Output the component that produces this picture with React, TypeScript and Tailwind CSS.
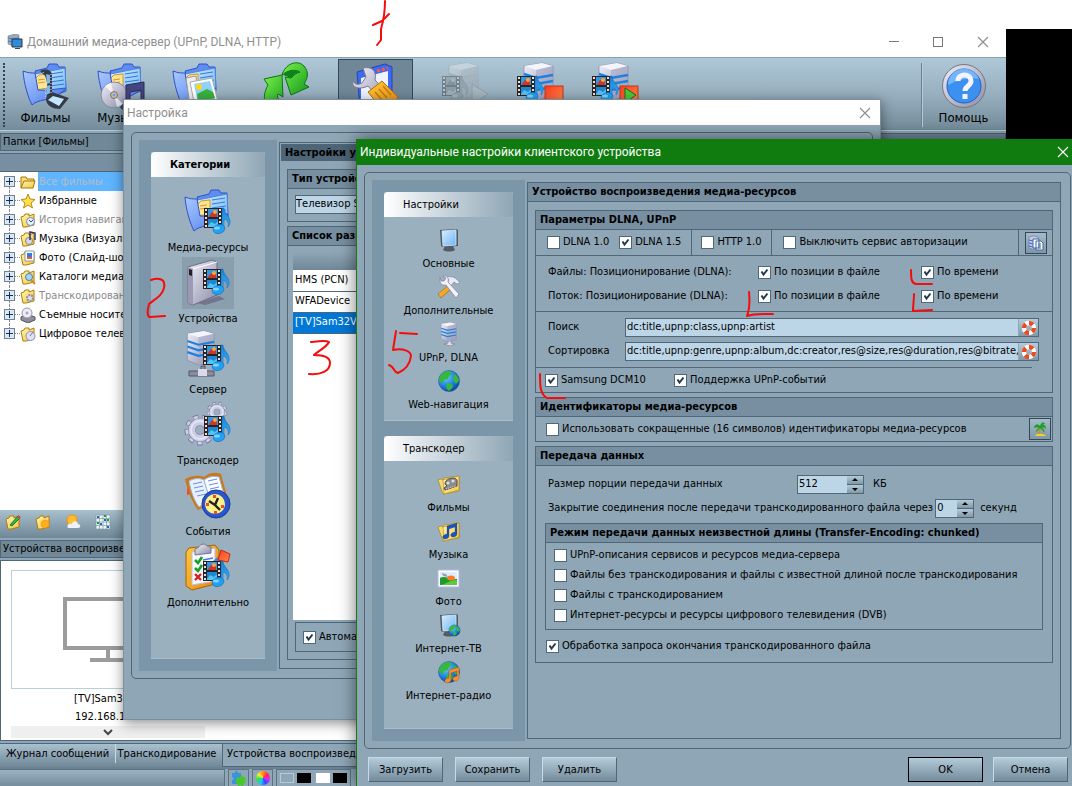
import type { ReactNode } from "react";
import clsx from "clsx";

const tahoma = "font-['DejaVu_Sans_Condensed','DejaVu_Sans',sans-serif]";
const caption = "font-[Roboto,'Noto_Sans',sans-serif]";

/* ---------- icon parts ---------- */

const Defs = () => (
  <svg className="absolute size-0" aria-hidden="true">
    <defs>
      <linearGradient id="blue" x1="0" y1="0" x2="1" y2="1">
        <stop offset="0" stopColor="#a9c8ff" />
        <stop offset="0.5" stopColor="#7ca4f6" />
        <stop offset="1" stopColor="#3f68dc" />
      </linearGradient>
      <linearGradient id="page" x1="0" y1="0" x2="1" y2="1">
        <stop offset="0" stopColor="#d6edff" />
        <stop offset="1" stopColor="#6cb4f5" />
      </linearGradient>
      <linearGradient id="silver" x1="0" y1="0" x2="1" y2="1">
        <stop offset="0" stopColor="#f1f1fb" />
        <stop offset="1" stopColor="#8a8aa8" />
      </linearGradient>
      <linearGradient id="gold" x1="0" y1="0" x2="1" y2="1">
        <stop offset="0" stopColor="#fff6b0" />
        <stop offset="1" stopColor="#f2c842" />
      </linearGradient>
      <linearGradient id="green" x1="0" y1="0" x2="1" y2="1">
        <stop offset="0" stopColor="#7bf04a" />
        <stop offset="1" stopColor="#10981c" />
      </linearGradient>
      <linearGradient id="note" x1="0" y1="0" x2="0" y2="1">
        <stop offset="0" stopColor="#1c7fd0" />
        <stop offset="1" stopColor="#36b4ff" />
      </linearGradient>
      <linearGradient id="orange" x1="0" y1="0" x2="1" y2="1">
        <stop offset="0" stopColor="#ffc93c" />
        <stop offset="1" stopColor="#e8860c" />
      </linearGradient>
      <linearGradient id="red" x1="0" y1="0" x2="1" y2="1">
        <stop offset="0" stopColor="#ff3a1e" />
        <stop offset="1" stopColor="#ff8a4a" />
      </linearGradient>
      <radialGradient id="globe" cx="0.35" cy="0.3" r="0.8">
        <stop offset="0" stopColor="#6fd0ff" />
        <stop offset="0.6" stopColor="#1c78dc" />
        <stop offset="1" stopColor="#0a3a94" />
      </radialGradient>
    </defs>
  </svg>
);

const Icon = ({
  className = "size-12",
  box = 48,
  children,
}: {
  className?: string;
  box?: number;
  children: ReactNode;
}) => (
  <svg
    className={clsx("shrink-0", className)}
    viewBox={`0 0 ${box} ${box}`}
    aria-hidden="true"
  >
    {children}
  </svg>
);

const FilmNote = ({ x = 0, y = 0 }: { x?: number; y?: number }) => (
  <g transform={`translate(${x} ${y})`}>
    <rect x="20" y="19" width="18" height="20" fill="#2c2422" />
    <rect x="24" y="20" width="10" height="8" fill="#2f9ae0" />
    <path d="M25 27l3-4 5 1v4h-8z" fill="#c8382c" />
    <circle cx="31" cy="23" r="2" fill="#ffa23c" />
    <rect x="24" y="30" width="10" height="8" fill="#1f86d2" />
    <path d="M24 37l3-4 4 2 3-3v6H24z" fill="#54c4f4" />
    <path
      d="M22 20v19M36 20v19"
      stroke="#e6e0dc"
      strokeWidth="2"
      strokeDasharray="2 2"
    />
    <path
      d="M38 40V19h2c0 6 7 8 6 15 0 2-2 4-2 4 1-5-1-7-4-8v10z"
      fill="url(#note)"
      stroke="#0e64b4"
      strokeWidth="0.5"
    />
    <ellipse
      cx="35"
      cy="40"
      rx="6"
      ry="4.5"
      transform="rotate(-15 35 40)"
      fill="#22a0f4"
      stroke="#0e64b4"
      strokeWidth="0.5"
    />
    <ellipse cx="33" cy="39" rx="3" ry="1.5" fill="#7fd4ff" />
  </g>
);

const BlueFolder = () => (
  <g>
    <path
      d="M13 9l12-3 2-4h8l2 3h6l1 24-20 8z"
      fill="#5f8cf0"
      stroke="#2f52c8"
    />
    <path d="M13 12l30-6 1 22-26 7z" fill="url(#page)" stroke="#4a86dc" />
    <path d="M28 12l13-2M28 16l13-2M28 20l14-2M28 24l14-2" stroke="#2f78d8" />
    <path d="M13 17l4-4 9-1v14l-13 2z" fill="#ffe694" stroke="#d49a20" />
    <path d="M16 18l7-1M16 21l7-1" stroke="#d49a20" />
    <path
      d="M1 9c5 2 8 2 12 2l3 17c8 1 17-1 28-2-4 6-14 10-22 12-5 1-9 2-12 5C6 35 2 22 1 9z"
      fill="url(#blue)"
      stroke="#2f52c8"
    />
  </g>
);

const Server = ({ dull }: { dull?: boolean }) => (
  <g>
    <path
      d="M8 4l18-3 11 3v30l-17 4L8 33z"
      fill="url(#silver)"
      stroke="#7c7c9a"
      strokeWidth="0.6"
    />
    <path d="M8 4l18-3 11 3-17 4z" fill="#f4f4fc" />
    <path d="M20 8l17-4v30l-17 4z" fill="#a9a9c8" opacity="0.6" />
    <path
      d="M8 12l12 4 17-3M8 18l12 4 17-3M8 24l12 4 17-3"
      fill="none"
      stroke={dull ? "#9aa4ac" : "#1b82e0"}
      strokeWidth="2.4"
    />
  </g>
);

const Cog = ({ cx, cy, r }: { cx: number; cy: number; r: number }) => (
  <g fill="none">
    <circle
      cx={cx}
      cy={cy}
      r={r * 0.86}
      stroke="#7474a0"
      strokeWidth={r * 0.34}
      pathLength="90"
      strokeDasharray="5.500 4.500"
    />
    <circle
      cx={cx}
      cy={cy}
      r={r * 0.84}
      stroke="#d0d0ea"
      strokeWidth={r * 0.26}
      pathLength="90"
      strokeDasharray="4.500 5.500"
      strokeDashoffset="-0.5"
    />
    <circle cx={cx} cy={cy} r={r * 0.54} stroke="#7474a0" strokeWidth={r * 0.5} />
    <circle cx={cx} cy={cy} r={r * 0.54} stroke="#ccccE4" strokeWidth={r * 0.44} />
    <circle cx={cx} cy={cy} r={r * 0.6} stroke="#e4e4f4" strokeWidth={r * 0.12} />
  </g>
);

const MediaIcon = () => (
  <Icon>
    <BlueFolder />
    <FilmNote y={1} />
  </Icon>
);
const DeviceIcon = () => (
  <Icon>
    <path d="M13 44l22-7 6 3-20 6z" fill="#74748c" />
    <path
      d="M4 8L28 1l5 2v33L9 46l-5-2z"
      fill="url(#silver)"
      stroke="#6c6c86"
    />
    <path d="M4 8l5 2v36l-5-2z" fill="#9a9ab4" />
    <path d="M5 10l3 1v6l-3-1z" fill="#222" />
    <path d="M9 10L33 3" stroke="#fff" />
    <FilmNote x={-1} y={-9} />
  </Icon>
);
const ServerIcon = () => (
  <Icon>
    <path d="M17 36h4v5h9v5H5v-5h12z" fill="#8c8ca0" stroke="#55556a" />
    <path d="M14 39h9v7h-9z" fill="#dadae8" />
    <g transform="translate(-4 0) scale(.92)">
      <Server />
    </g>
    <FilmNote x={-1} y={-4} />
  </Icon>
);
const GearIcon = () => (
  <Icon>
    <Cog cx={33} cy={11} r={10} />
    <Cog cx={16} cy={29} r={15} />
    <FilmNote y={-4} />
  </Icon>
);
const EventsIcon = () => (
  <Icon>
    <path d="M1 7c8-4 14-4 19-2 6-5 12-5 17-3l7 26-12 1-18 9C8 30 4 20 1 7z" fill="#c9791c" />
    <path
      d="M5 9c6-3 10-3 15-1l6 20-11 7C10 28 7 20 5 9z"
      fill="#e8f2ff"
      stroke="#9db8e4"
    />
    <path d="M20 8c5-4 10-4 15-3l6 21-15 2z" fill="#f8fbff" stroke="#9db8e4" />
    <path
      d="M9 12l9-2M10 16l9-2M11 20l9-2M13 24l9-2M24 9l9-2M25 13l9-2M26 17l9-2"
      stroke="#6c8ce0"
    />
    <path d="M3 15l3 7-3 1z" fill="#f04a2a" />
    <circle cx="32" cy="32" r="14" fill="#2a55cc" stroke="#173a98" />
    <circle cx="31" cy="32" r="10" fill="#fff08a" />
    <path d="M34 26l-3 7 5 5M31 33l-6-4" stroke="#222" strokeWidth="2.4" fill="none" />
    <path d="M29 23h3v3h-3zM30 39h3v3h-3zM22 31h3v3h-3zM37 33h3v3h-3z" fill="#e8502a" />
  </Icon>
);
const ExtraIcon = () => (
  <Icon>
    <path
      d="M5 5l26-3 4 5v33L8 47l-6-4V9z"
      fill="url(#orange)"
      stroke="#a8600c"
    />
    <path d="M8 9l23-4v33L8 42z" fill="#f6f8ff" stroke="#b4c0e4" />
    <path d="M11 6c4 0 4-5 8-5s3 3 8 3v6l-16 2z" fill="url(#silver)" stroke="#77778c" />
    <path d="M19 17l10-2M19 25l10-2" stroke="#4f78e8" strokeWidth="1.5" />
    <path d="M29 18l6-5 4 6-5 4z" fill="#4f78e8" />
    <path d="M37 7l9 4-2 8-10-2z" fill="url(#red)" stroke="#c42a12" />
    <path d="M11 17l3 3 4-6M11 25l3 3 4-6" fill="none" stroke="#16a022" strokeWidth="2.6" />
    <path d="M11 31l6 6M17 31l-6 6" stroke="#d81c1c" strokeWidth="2.4" />
    <FilmNote x={-1} y={-1} />
  </Icon>
);

/* small 24px icons of the inner dialog */
const MonitorShape = () => (
  <g>
    <path d="M8 18h8l2 4c-3 2-9 2-12 0z" fill="#555b64" />
    <path d="M3 2l16-1 2 1v16l-15 1-2-1z" fill="#505862" />
    <path d="M5 3l14-1v15L6 18z" fill="url(#page)" stroke="#d4ecfa" strokeWidth="0.8" />
  </g>
);
const GlobeShape = () => (
  <g>
    <circle cx="12" cy="12" r="10.5" fill="url(#globe)" stroke="#0e4a94" strokeWidth="0.5" />
    <path
      d="M4 6c3-4 7-4 9-4l2 3-3 2-1 3-4 1-1 3-4-2c0-2 0-4 2-6zM10 14l5 1 1 3-4 4-3-3zM17 5c3 1 5 4 5 7l-3 3-3-4z"
      fill="#35b83c"
    />
  </g>
);
const FolderShape = () => (
  <g>
    <path d="M1 8l3-1 2 1 1-2 15-2v15L6 22z" fill="#f4dc74" stroke="#a87408" strokeWidth="0.6" />
    <path d="M6 8l16-4v14L7 22z" fill="url(#gold)" stroke="#b88410" strokeWidth="0.6" />
  </g>
);
const NotesShape = ({ fill }: { fill: string }) => (
  <path
    d="M10 7l10-3v11c0 2-2 3-4 3s-3-2-2-3 2-2 4-2V8l-6 2v7c0 2-2 3-4 3s-3-2-2-3 2-2 4-2z"
    fill={fill}
    stroke="#00000055"
    strokeWidth="0.5"
  />
);

const MonitorIcon = () => (
  <Icon className="size-6" box={24}>
    <MonitorShape />
  </Icon>
);
const ToolsIcon = () => (
  <Icon className="size-6" box={24}>
    <path d="M12 10L1 19l3 4L15 13z" fill="url(#orange)" stroke="#9a6408" strokeWidth="0.6" />
    <path
      d="M9 2c6-1 10 0 14 6l-3 1-3-2-4 5-4-3 3-4z"
      fill="#e8eaf6"
      stroke="#7c7c9c"
      strokeWidth="0.6"
    />
    <path
      d="M3 2l1 4 3 0 2-3-3-2c4-1 6 2 5 6l11 12-3 4L9 10c-5 1-7-3-6-8z"
      fill="#f2f2fb"
      stroke="#7c7c9c"
      strokeWidth="0.7"
    />
  </Icon>
);
const SmallServerIcon = () => (
  <Icon className="size-6" box={24}>
    <path d="M11 18h3v3l4 1-5 2-6-2 4-1z" fill="#dcdcea" stroke="#68687c" strokeWidth="0.5" />
    <g transform="translate(0 0) scale(.52)">
      <Server />
    </g>
  </Icon>
);
const GlobeIcon = () => (
  <Icon className="size-6" box={24}>
    <GlobeShape />
  </Icon>
);
const FilmFolderIcon = () => (
  <Icon className="size-6" box={24}>
    <FolderShape />
    <path d="M8 12c0-6 12-8 12-3v5l-12 4-1-2 3-2z" fill="#8b8b94" stroke="#4c4c54" />
    <circle cx="11" cy="11" r="1.6" fill="#ddd" />
    <circle cx="16" cy="9" r="1.6" fill="#ddd" />
    <path d="M9 17l10-3" stroke="#eee" strokeDasharray="1 1" />
  </Icon>
);
const MusicFolderIcon = () => (
  <Icon className="size-6" box={24}>
    <FolderShape />
    <NotesShape fill="#1854c8" />
  </Icon>
);
const PhotoIcon = () => (
  <Icon className="size-6" box={24}>
    <rect x="1" y="4" width="21" height="17" fill="#fff" stroke="#b8b4e8" />
    <rect x="3" y="6" width="17" height="13" fill="#dceefc" />
    <path d="M3 12c5-3 9 2 17 1v6H3z" fill="#1f9a2a" />
    <path d="M3 19c5 0 9-5 17-5v5z" fill="#58cc3c" />
    <ellipse cx="14" cy="12" rx="4" ry="2.5" fill="#ff7a2c" />
    <path d="M5 7l4 1 2 3-5-1z" fill="#98a4ac" />
  </Icon>
);
const NetTvIcon = () => (
  <Icon className="size-6" box={24}>
    <MonitorShape />
    <g transform="translate(11 11) scale(.54)">
      <GlobeShape />
    </g>
  </Icon>
);
const NetRadioIcon = () => (
  <Icon className="size-6" box={24}>
    <GlobeShape />
    <g transform="translate(2 3)">
      <NotesShape fill="#ff8a2a" />
    </g>
  </Icon>
);

/* ---------- controls ---------- */

const Check = ({
  label,
  checked,
  className,
}: {
  label: string;
  checked?: boolean;
  className?: string;
}) => (
  <label className={clsx("flex items-center gap-[3px] whitespace-nowrap", className)}>
    <span className="grid shrink-0">
      <input
        type="checkbox"
        defaultChecked={checked}
        className="peer col-start-1 row-start-1 size-[13px] appearance-none border border-[#4f6778] bg-white"
      />
      <svg
        viewBox="0 0 13 13"
        className="pointer-events-none invisible col-start-1 row-start-1 size-[13px] peer-checked:visible"
      >
        <path d="M3.5 5.5l2 3 4-5" fill="none" stroke="#1f3a4c" strokeWidth="2" />
      </svg>
    </span>
    {label}
  </label>
);

const Group = ({
  title,
  className,
  children,
}: {
  title: string;
  className?: string;
  children: ReactNode;
}) => (
  <section className={clsx("flex flex-col border border-[#4f6778]", className)}>
    <h3 className="h-[19px] shrink-0 overflow-hidden border-b border-[#4f6778] bg-[#778fa0] pl-1 leading-[18px] font-bold whitespace-nowrap">
      {title}
    </h3>
    {children}
  </section>
);

const PushButton = ({ label, primary }: { label: string; primary?: boolean }) => (
  <button
    className={clsx(
      "h-[25px] w-[75px] border bg-linear-to-b from-[#b4cbda] to-[#748c9b] pt-px",
      primary
        ? "border-black"
        : "border-t-[#c3dbea] border-r-[#4f6778] border-b-[#4f6778] border-l-[#c3dbea]",
    )}
  >
    {label}
  </button>
);

const Spin = ({ label, value, className }: { label: string; value: string; className: string }) => (
  <span className={clsx("flex h-[19px] shrink-0 border border-[#4f6778] bg-[#bdd6e7]", className)}>
    <input aria-label={label} defaultValue={value} className="min-w-0 flex-1 px-px outline-none" />
    <span className="flex w-4 flex-col gap-px bg-[#4f6778]">
      {["M4 5h6L7 2z", "M4 3h6L7 6z"].map((d) => (
        <button
          key={d}
          aria-label={label}
          className="h-2 bg-linear-to-b from-[#b4cbda] to-[#8198a7]"
        >
          <svg viewBox="0 0 14 8" className="mx-auto h-2 w-3.5">
            <path d={d} />
          </svg>
        </button>
      ))}
    </span>
  </span>
);

const HelpField = ({ id, label, value }: { id: string; label: string; value: string }) => (
  <div className="flex items-center pr-[13px] pl-3">
    <label htmlFor={id} className="w-[77px] shrink-0">
      {label}
    </label>
    <div className="flex h-[19px] min-w-0 flex-1 border border-[#4f6778] bg-[#bdd6e7]">
      <input id={id} defaultValue={value} className="min-w-0 flex-1 pl-px outline-none" />
      <button
        aria-label="Справка"
        className="flex w-5 items-center justify-center border-l border-[#8fa6b5] bg-linear-to-b from-[#b4cbda] to-[#8198a7]"
      >
        <svg viewBox="0 0 16 16" className="size-4">
          <circle cx="8" cy="8" r="5" fill="none" stroke="#fff" strokeWidth="4.4" />
          <circle
            cx="8"
            cy="8"
            r="5"
            fill="none"
            stroke="#ee4a1e"
            strokeWidth="4.4"
            pathLength="80"
            strokeDasharray="11 9"
          />
        </svg>
      </button>
    </div>
  </div>
);

const NavHeader = ({ title, bold }: { title: string; bold?: boolean }) => (
  <h2
    className={clsx(
      "h-[25px] rounded-t-sm bg-linear-to-r from-white to-[#8fa6b5] pl-[19px] leading-[26px]",
      bold && "font-bold",
    )}
  >
    {title}
  </h2>
);

const NavPanel = ({
  title,
  items,
  className,
}: {
  title: string;
  items: [string, () => ReactNode][];
  className?: string;
}) => (
  <nav className={clsx("border-b border-[#a8bccb] bg-[#9bb0be]", className)}>
    <NavHeader title={title} />
    <ul className="pt-[11px]">
      {items.map(([label, Glyph]) => (
        <li key={label}>
          <button className="flex h-[47px] w-full flex-col items-center">
            <Glyph />
            <span className="leading-6">{label}</span>
          </button>
        </li>
      ))}
    </ul>
  </nav>
);

const CloseGlyph = () => (
  <svg viewBox="0 0 12 12" className="size-3">
    <path d="M1 1l10 10M11 1L1 11" stroke="currentColor" strokeWidth="1.2" />
  </svg>
);

/* ---------- main window ---------- */

const ToolButton = ({
  label,
  active,
  className,
  children,
}: {
  label: string;
  active?: boolean;
  className?: string;
  children: ReactNode;
}) => (
  <button
    className={clsx(
      "flex h-[70px] w-[75px] shrink-0 flex-col items-center pt-[3px] text-[13px] leading-4",
      active && "border border-[#33495a] bg-[#6f8797]",
      className,
    )}
  >
    {children}
    {label}
  </button>
);

const SmallFolder = ({ children }: { children?: ReactNode }) => (
  <Icon className="size-4" box={16}>
    <path d="M1 5l3-1 1-2h4v2l5-2v11l-8 2H3z" fill="url(#gold)" stroke="#b07c10" />
    {children}
  </Icon>
);

const tree: { label: string; muted?: boolean; icon: ReactNode }[] = [
  {
    label: "Все фильмы",
    icon: (
      <Icon className="size-4" box={16}>
        <path d="M1 14V3h5l1 2h7v3" fill="#ffdf70" stroke="#a87408" />
        <path d="M1 14L4 7h11l-2 7z" fill="url(#gold)" stroke="#a87408" />
      </Icon>
    ),
  },
  {
    label: "Избранные",
    icon: (
      <Icon className="size-4" box={16}>
        <path d="M8 1l2 5 5 .5-4 3.500 1.500 5L8 12l-4.500 3 1.500-5-4-3.500 5-.5z" fill="#ffe04a" stroke="#b88a10" />
      </Icon>
    ),
  },
  {
    label: "История навигации",
    muted: true,
    icon: (
      <SmallFolder>
        <circle cx="10.500" cy="9.500" r="4" fill="#e8f2ff" stroke="#6a88b8" />
        <path d="M9 8l2 2 2-2" fill="none" stroke="#2a4a80" />
      </SmallFolder>
    ),
  },
  {
    label: "Музыка (Визуализация)",
    icon: (
      <SmallFolder>
        <circle cx="9" cy="10" r="3.500" fill="#d8d8e4" stroke="#888" />
        <path d="M10 9V1l5 1v7" fill="none" stroke="#34346c" strokeWidth="1.500" />
      </SmallFolder>
    ),
  },
  {
    label: "Фото (Слайд-шоу)",
    icon: (
      <SmallFolder>
        <path d="M5 1h9v10H5z" fill="#fff" stroke="#8a94a8" />
        <path d="M7 3h5v6H7z" fill="#2c7ee0" />
        <path d="M7 7h5v2H7z" fill="#f05a2a" />
      </SmallFolder>
    ),
  },
  {
    label: "Каталоги медиа-ресурсов",
    icon: (
      <SmallFolder>
        <circle cx="9" cy="8" r="3.500" fill="#9cd8ff" stroke="#4a80b8" />
        <path d="M11 11l4 4" stroke="#d88a20" strokeWidth="2" />
      </SmallFolder>
    ),
  },
  {
    label: "Транскодирование",
    muted: true,
    icon: (
      <SmallFolder>
        <circle cx="10" cy="10" r="3" fill="#ddd" stroke="#8c8ca8" strokeWidth="2" strokeDasharray="2 1" />
      </SmallFolder>
    ),
  },
  {
    label: "Съемные носители",
    icon: (
      <Icon className="size-4" box={16}>
        <path d="M1 10l6-3 8 3v3l-7 3-7-3z" fill="#8e8e98" stroke="#55555f" />
        <circle cx="7" cy="6" r="5" fill="#ececf4" stroke="#9898a8" />
        <circle cx="7" cy="6" r="1.500" fill="#b0a0d0" />
      </Icon>
    ),
  },
  {
    label: "Цифровое телевидение",
    icon: (
      <SmallFolder>
        <circle cx="10.500" cy="10" r="4.500" fill="#dfe2f4" stroke="#8c90b4" />
        <path d="M10 10l3-4" stroke="#7478a0" />
      </SmallFolder>
    ),
  },
];

const PaneTitle = ({ children }: { children: ReactNode }) => (
  <div className="my-0.5 h-[18px] shrink-0 border border-[#4f6778] bg-[#708898] pl-0.5 leading-4">
    {children}
  </div>
);

const MainWindow = () => (
  <div className="absolute top-[29px] right-[66px] bottom-0 left-0 flex flex-col bg-[#8fa6b6]">
    <header
      className={clsx(
        "flex h-7 shrink-0 items-center bg-white pr-[17px] pb-[3px] pl-[7px] text-xs text-[#8f8f8f]",
        caption,
      )}
    >
      <Icon className="size-4" box={16}>
        <path d="M1 2l7-2 4 1v9l-6 2-5-2z" fill="#9aa8bc" stroke="#5f7088" strokeWidth="0.500" />
        <path d="M1 4l5 1 6-1M1 7l5 1 6-1" stroke="#3c7cc8" fill="none" />
        <path d="M5 5h10v8H5z" fill="#2a8ee0" stroke="#333" />
        <path d="M8 14h5v1H8z" fill="#444" />
      </Icon>
      <span className="ml-1 flex-1">Домашний медиа-сервер (UPnP, DLNA, HTTP)</span>
      <div className="flex items-center gap-[34px]">
        <button aria-label="Свернуть">
          <span className="block h-px w-2.5 bg-[#777]" />
        </button>
        <button aria-label="Развернуть">
          <span className="block size-2.5 border border-[#777]" />
        </button>
        <button aria-label="Закрыть">
          <CloseGlyph />
        </button>
      </div>
    </header>

    {/* TOOLBAR */}
    <div className="flex h-[74px] shrink-0 border-t border-b border-t-[#8aa2b0] border-b-[#b4cbda] bg-linear-to-b from-[#afc8d8] via-[#97afbe] to-[#748c9b] pt-px">
      <span className="mt-1 mr-[3px] ml-[3px] h-16 border-l-2 border-dotted border-[#2f4656]" />
      <ToolButton label="Фильмы">
        <Icon>
          <BlueFolder />
          <path d="M18 9c7-3 12-1 12 5v16l17 6-9 11c-7 0-13-3-14-9 2-8 2-18-1-24z" fill="#343a46" />
          <path d="M24 12l4 1v8l-3 1zM25 24l3-1v8l-4 2z" fill="#7eb8ec" />
          <path d="M26 38l5-4 11 3-5 7z" fill="#c4e6fc" />
          <path d="M21 10c3 8 3 18 2 27M29 12v20" fill="none" stroke="#dde" strokeDasharray="1 2" />
        </Icon>
      </ToolButton>
      <ToolButton label="Музыка">
        <Icon>
          <BlueFolder />
          <circle cx="17" cy="33" r="13" fill="url(#silver)" stroke="#88889c" />
          <path d="M17 33l-9-9a13 13 0 0 1 6-3zM17 33l9 9a13 13 0 0 1-6 3z" fill="#fff" opacity="0.7" />
          <circle cx="17" cy="33" r="3.500" fill="#c8b8b0" stroke="#776" />
          <circle cx="17" cy="33" r="1.300" fill="#7c96e0" />
          <path
            d="M29 23l18-3v19c0 3-6 5-8 3-1-2 2-4 5-4V28l-11 2v14c-2 4-8 4-9 2s2-4 5-4z"
            fill="#46467e"
            stroke="#2a2a58"
          />
        </Icon>
      </ToolButton>
      <ToolButton label="Фото">
        <Icon>
          <BlueFolder />
          <path d="M14 16l10-2 3 28-9 2z" fill="#eee" stroke="#999" />
          <path d="M18 20l22-4 6 24-23 5z" fill="#fff" stroke="#aaa" />
          <path d="M22 22l16-3 5 18-17 4z" fill="#8fd0ff" />
          <path d="M25 32l10-5 6 3 2 6-17 4z" fill="#38b43a" />
          <circle cx="27" cy="25" r="3" fill="#ffd61e" />
        </Icon>
      </ToolButton>
      <ToolButton label="Обновить" className="ml-3.5">
        <Icon>
          <path
            d="M3 17l18-4 1 22-5-3c-2 4 2 8 10 9-2 3-4 5-9 5C5 45-1 38 7 23z"
            fill="url(#green)"
            stroke="#0c7414"
          />
          <path
            d="M21 13C24 2 36-3 43 4c5 6 4 12 0 18l5 3-18 8-6-18 6 1c3-3 5-5 9-6-5-3-12-2-18 3z"
            fill="url(#green)"
            stroke="#0c7414"
          />
          <path d="M22 13c4-5 12-6 17-3-4 1-7 3-9 6z" fill="#0d8418" />
        </Icon>
      </ToolButton>
      <ToolButton label="Настройка" active className="ml-4">
        <Icon>
          <path d="M5 9l28-8 7 3v42H8z" fill="#3c6af0" stroke="#2444b8" />
          <path d="M9 15l27-7v34H9z" fill="#eef4ff" />
          <path d="M25 8l11-3" stroke="#ff5a3a" strokeWidth="3" strokeDasharray="3 2" />
          <path
            d="M1 18c2 4 5 4 9 2l4-6-3-9c9-2 14 3 12 12l16 17-7 8-16-19C8 27-1 25 1 18z"
            fill="url(#silver)"
            stroke="#7a7a8c"
          />
          <path d="M16 29l14-11 16 16-9 13-9-3z" fill="url(#orange)" stroke="#b46a08" />
          <path d="M23 29l8 9M27 26l8 9M31 23l8 9" stroke="#c27c10" strokeWidth="1.500" />
        </Icon>
      </ToolButton>
      <ToolButton label="Запуск" className="ml-3.5 opacity-60 grayscale">
        <Icon className="size-12 opacity-60">
          <Server dull />
          <FilmNote x={-19} y={-5} />
          <path d="M31 22l16 10-16 11z" fill="#bbb" stroke="#777" />
        </Icon>
      </ToolButton>
      <ToolButton label="Остановка">
        <Icon>
          <Server />
          <FilmNote x={-19} y={-5} />
          <rect x="29" y="24" width="18" height="18" fill="url(#red)" stroke="#b83a1c" />
        </Icon>
      </ToolButton>
      <ToolButton label="Перезапуск">
        <Icon>
          <Server />
          <FilmNote x={-19} y={-5} />
          <rect x="29" y="24" width="18" height="18" fill="url(#red)" stroke="#b83a1c" />
          <path d="M34 26l11 7-11 8z" fill="#4cc83a" stroke="#14701c" />
        </Icon>
      </ToolButton>
      <span className="mt-1 mr-[3px] ml-auto h-16 border-r border-l border-l-[#6b8292] border-r-[#b4cbda]" />
      <ToolButton label="Помощь" className="mr-[5px]">
        <Icon>
          <circle cx="24" cy="24" r="21.500" fill="url(#silver)" stroke="#777" />
          <circle cx="24" cy="24" r="17" fill="#3c90f0" stroke="#1c62c4" />
          <path d="M8 23a16 16 0 0 1 31-6c-8-2-20 0-31 6z" fill="#8cc4ff" opacity="0.700" />
          <path
            d="M18 19c0-8 13-8 13 0 0 5-6 5-6 10M25 32v5"
            fill="none"
            stroke="#f4f4ff"
            strokeWidth="5"
          />
        </Icon>
      </ToolButton>
    </div>

    <PaneTitle>Папки [Фильмы]</PaneTitle>
    <div className="h-[19px] shrink-0 border-t border-b border-t-[#4f6778] border-b-[#4f6778] bg-[#778fa0]" />
    <ul className="min-h-0 flex-1 bg-white pl-1">
      {tree.map(({ label, muted, icon }, i) => (
        <li key={label} className="flex h-[19px] items-center">
          <span className="flex h-full flex-col items-center">
            <span
              className={clsx(
                "flex-1 border-l border-dotted",
                i === 0 ? "border-transparent" : "border-[#8b8b8b]",
              )}
            />
            <button
              aria-label="Раскрыть"
              className="flex size-[11px] items-center justify-center border border-[#6c8496] bg-[#dbe8f2] leading-none"
            >
              <svg viewBox="0 0 9 9" className="size-[9px]">
                <path d="M1 4.500h7M4.500 1v7" stroke="#1c2c5c" />
              </svg>
            </button>
            <span
              className={clsx(
                "flex-1 border-l border-dotted",
                i === tree.length - 1 ? "border-transparent" : "border-[#8b8b8b]",
              )}
            />
          </span>
          <span className="w-[5px] border-t border-dotted border-[#8b8b8b]" />
          {icon}
          <span
            className={clsx(
              "ml-0.5 flex-1 pl-px leading-[19px]",
              i === 0 && "bg-[#5fb5ff] text-[#b4bcc4]",
              muted && "text-[#8b8b8b]",
            )}
          >
            {label}
          </span>
        </li>
      ))}
    </ul>

    {/* VIEW MODES */}
    <div className="flex h-7 shrink-0 items-center gap-3.5 bg-linear-to-b from-[#a9c0cf] to-[#6f8797] pb-1 pl-[5px]">
      <SmallFolder>
        <path d="M5 11L13 2l2 2-8 8z" fill="#3ab44a" stroke="#1a7a2a" />
        <path d="M13 2l2 2" stroke="#e03a2a" strokeWidth="2" />
      </SmallFolder>
      <SmallFolder>
        <circle cx="10" cy="10" r="4" fill="#ffae1c" stroke="#f08a10" strokeDasharray="1 1" />
      </SmallFolder>
      <Icon className="size-4" box={16}>
        <circle cx="7" cy="6" r="5" fill="#ffc02a" stroke="#ff8a10" />
        <path d="M3 14c-2-4 2-5 4-4 1-4 6-3 6 0 3 0 3 4 0 4z" fill="#eef2f8" />
      </Icon>
      <Icon className="size-4" box={16}>
        <path d="M1 1h14v14H1z" fill="#eef6f2" />
        <path d="M1 1h14v14H1zM1 4.500h14M1 8h14M1 11.500h14M4.500 1v14M8 1v14M11.500 1v14" fill="none" stroke="#7c98a8" strokeWidth="0.700" />
        <path d="M2 2h2v2H2zM9 5h2v2H9zM5 9h2v2H5zM12 12h2v2h-2z" fill="#1c68c8" />
        <path d="M9 1h2v2H9zM2 8h2v2H2zM12 5h2v2h-2z" fill="#1c9a3c" />
      </Icon>
    </div>
    <PaneTitle>Устройства воспроизведения медиа-ресурсов</PaneTitle>
    <div className="flex h-[181px] shrink-0 flex-col border border-[#4f6778] bg-white pt-[9px] pl-2.5">
      <figure className="flex w-[194px] flex-col items-center">
        <div className="flex h-[119px] w-full items-center justify-center border border-[#b8d0dc]">
          <svg viewBox="0 0 90 66" className="h-[66px] w-[90px] fill-none stroke-[#9c9c9c] stroke-4">
            <path d="M2 2h86v49H2zM45 51v12M27 63h36" />
          </svg>
        </div>
        <figcaption className="pt-px text-center leading-[18px]">
          [TV]Sam32VA
          <br />
          192.168.1.43
        </figcaption>
      </figure>
      <button
        aria-label="Прокрутить вниз"
        className="flex h-3 w-[194px] items-center justify-center bg-[#efefef]"
      >
        <svg viewBox="0 0 10 8" className="h-2 w-2.5">
          <path d="M1 2l4 4 4-4" fill="none" stroke="#444" strokeWidth="2" />
        </svg>
      </button>
    </div>

    <div className="mt-0.5 flex h-6 shrink-0 border-t border-[#4f6778] bg-linear-to-b from-[#a9c0cf] to-[#6f8797] leading-5 whitespace-nowrap">
      <button className="mb-1 w-[116px] border-r border-[#c3dbea]">Журнал сообщений</button>
      <button className="mb-1 w-[106px] pr-1">Транскодирование</button>
      <button className="border border-t-0 border-[#4f6778] bg-[#8fa6b6] px-1 pb-1">
        Устройства воспроизведения
      </button>
    </div>
    <footer className="flex h-[19px] shrink-0 gap-[3px] border-t-2 border-[#6b8292] bg-[#8fa6b6]">
      <span className="h-full w-[225px] border-t border-r border-[#5b7384] bg-linear-to-b from-[#9ab2c1] to-[#748c9b]" />
      <span className="flex w-[21px] justify-center border border-b-0 border-[#5b7384]">
        <Icon className="size-4" box={16}>
          <path d="M1 3h3c0-3 3-3 3 0h3v11H1v-4c2 0 2-3 0-3z" fill="#3a94d8" />
          <path d="M6 7l3 1c0-3 3-3 3-1l3 1-1 3c2 1 1 3-1 2l-1 3-3-1c-1 2-3 1-2-1l-2-1z" fill="#48c828" />
        </Icon>
      </span>
      <span className="flex w-[21px] items-center justify-center border border-b-0 border-[#5b7384]">
        <span className="size-3.5 rounded-full bg-[conic-gradient(#ff8a1e,#ff2a4a,#d82aff,#2a4aff,#1ec8ff,#2ae04a,#f4f02a,#ff8a1e)]" />
      </span>
      <span className="flex items-center gap-[3px] border border-b-0 border-[#5b7384] px-[3px]">
        <span className="h-2.5 w-3.5 border border-[#b4cbda]" />
        <span className="h-2.5 w-3.5 bg-black" />
        <span className="ml-0.5 h-2.5 w-3.5 bg-white" />
        <span className="h-2.5 w-3.5 bg-black" />
      </span>
    </footer>
  </div>
);

/* ---------- settings window ---------- */

const categories: [string, () => ReactNode][] = [
  ["Медиа-ресурсы", MediaIcon],
  ["Устройства", DeviceIcon],
  ["Сервер", ServerIcon],
  ["Транскодер", GearIcon],
  ["События", EventsIcon],
  ["Дополнительно", ExtraIcon],
];

const devices = ["HMS (PCN)", "WFADevice", "[TV]Sam32VA"];

const SettingsWindow = () => (
  <div className="absolute top-[99px] left-[123px] flex w-[758px] flex-col border border-[#7b8f9c] bg-[#8fa6b6] shadow-[0_3px_12px_rgba(0,0,0,0.45)]">
    <header
      className={clsx(
        "flex h-[25px] items-center justify-between bg-white pr-[9px] pl-[3px] text-xs text-[#8f8f8f]",
        caption,
      )}
    >
      Настройка
      <button aria-label="Закрыть">
        <CloseGlyph />
      </button>
    </header>
    <div className="mx-[7px] mt-[7px] mb-10 flex h-[547px] rounded-[5px] border border-[#4f6778] p-[7px]">
      <div className="w-[138px] shrink-0 bg-[#7c96a9] p-3">
        <nav className="h-[507px] border-b border-[#a8bccb] bg-[#9bb0be]">
          <NavHeader title="Категории" bold />
          <ul className="pt-[9px]">
            {categories.map(([label, Glyph]) => (
              <li key={label}>
                <button className="flex h-[71px] w-full flex-col items-center">
                  <span
                    className={clsx(
                      "flex size-[52px] shrink-0 items-center justify-center",
                      label === "Устройства" && "bg-[#899fae]",
                    )}
                  >
                    <Glyph />
                  </span>
                  <span className="leading-5">{label}</span>
                </button>
              </li>
            ))}
          </ul>
        </nav>
      </div>
      <div className="my-0.5 ml-0.5 flex min-w-0 flex-1 flex-col border border-[#4f6778] p-px">
        <h3 className="h-[17px] bg-[#4d6576] pl-1 leading-[17px] font-bold whitespace-nowrap">
          Настройки устройств
        </h3>
        <Group title="Тип устройства" className="mx-1.5 mt-2">
          <select
            aria-label="Тип устройства"
            className="m-[7px] mt-[6px] h-[19px] appearance-none border border-[#4f6778] bg-[#bdd6e7]"
          >
            <option>Телевизор Samsung</option>
          </select>
        </Group>
        <Group title="Список разрешенных устройств" className="mx-1.5 mt-1 mb-[7px] flex-1">
          <div className="mx-[5px] mt-1.5 flex-1 bg-white">
            <table className="w-full border-collapse">
              <thead>
                <tr>
                  <th aria-label="Имя" className="h-[18px] bg-linear-to-b from-[#8fa6b6] to-[#6f8797]" />
                </tr>
              </thead>
              <tbody>
                {devices.map((name, i) => (
                  <tr key={name}>
                    <td
                      className={clsx(
                        "h-[21px] border-b border-[#4f6778] pl-0.5",
                        i === 2 && "bg-[#0078d7] text-white",
                      )}
                    >
                      {name}
                    </td>
                  </tr>
                ))}
              </tbody>
            </table>
          </div>
          <div className="m-[7px] mt-0.5 flex h-[30px] items-center border border-[#4f6778] pl-[7px]">
            <Check label="Автоматически добавлять" checked />
          </div>
        </Group>
      </div>
    </div>
  </div>
);

/* ---------- client device window ---------- */

const positioning = ["Файлы: Позиционирование (DLNA):", "Поток: Позиционирование (DLNA):"];

const DeviceWindow = () => (
  <div className="absolute top-[139px] right-0 bottom-0 left-[356px] flex flex-col border-l border-[#107c10] bg-[#8fa6b6] shadow-[0_0_16px_rgba(0,0,0,0.55)]">
    <header
      className={clsx(
        "flex h-[26px] shrink-0 items-center justify-between bg-[#107c10] pr-[3px] pl-[3px] text-xs text-white",
        caption,
      )}
    >
      Индивидуальные настройки клиентского устройства
      <button aria-label="Закрыть">
        <CloseGlyph />
      </button>
    </header>

    <div className="mt-[7px] mr-px ml-[7px] flex h-[577px] rounded-[5px] border border-[#4f6778] p-[7px]">
      <div className="flex w-[153px] shrink-0 flex-col gap-[15px] bg-[#7c96a9] p-3">
        <NavPanel
          title="Настройки"
          className="h-[229px]"
          items={[
            ["Основные", MonitorIcon],
            ["Дополнительные", ToolsIcon],
            ["UPnP, DLNA", SmallServerIcon],
            ["Web-навигация", GlobeIcon],
          ]}
        />
        <NavPanel
          title="Транскодер"
          className="flex-1"
          items={[
            ["Фильмы", FilmFolderIcon],
            ["Музыка", MusicFolderIcon],
            ["Фото", PhotoIcon],
            ["Интернет-ТВ", NetTvIcon],
            ["Интернет-радио", NetRadioIcon],
          ]}
        />
      </div>

      <Group
        title="Устройство воспроизведения медиа-ресурсов"
        className="m-0.5 min-w-0 flex-1"
      >
        <div className="flex flex-col gap-1 px-[7px] pt-2">
          <Group title="Параметры DLNA, UPnP">
            <div className="flex h-[26px] border-b border-[#4f6778]">
              <div className="flex items-center gap-2.5 border-r border-[#4f6778] pr-2.5 pl-[11px]">
                <Check label="DLNA 1.0" />
                <Check label="DLNA 1.5" checked />
              </div>
              <div className="flex w-20 items-center border-r border-[#4f6778] pl-[9px]">
                <Check label="HTTP 1.0" />
              </div>
              <div className="flex flex-1 items-center border-r border-[#4f6778] pl-[11px]">
                <Check label="Выключить сервис авторизации" />
              </div>
              <div className="flex w-[33px] items-center justify-center">
                <button
                  aria-label="Копировать"
                  className="flex size-[22px] items-center justify-center border border-[#33495a] bg-linear-to-b from-[#a4bbca] to-[#7f97a6]"
                >
                  <Icon className="size-4" box={16}>
                    <path d="M1 2l5-1 4 1v11l-5 1-4-1z" fill="#c9c9ea" stroke="#7070a0" strokeWidth="0.600" />
                    <path d="M1 5l4 1M1 8l4 1M1 11l4 1" stroke="#2a6ad0" />
                    <path d="M5 4h6v9H5zM8 6h5l2 2v7H8z" fill="#f4f8ff" stroke="#4a6a9c" />
                    <path d="M10 9h3M10 11h3M10 13h3" stroke="#4a6a9c" />
                  </Icon>
                </button>
              </div>
            </div>
            <div className="flex h-14 flex-col justify-center gap-[5px] border-b border-[#4f6778] pt-px pl-3">
              {positioning.map((name) => (
                <div key={name} className="flex h-[19px] items-center">
                  <span className="w-[210px] shrink-0 whitespace-nowrap">{name}</span>
                  <Check label="По позиции в файле" checked className="w-[163px]" />
                  <Check label="По времени" checked />
                </div>
              ))}
            </div>
            <div className="flex flex-col gap-[5px] pt-1.5 pb-1.5">
              <HelpField id="search" label="Поиск" value="dc:title,upnp:class,upnp:artist" />
              <HelpField
                id="sort"
                label="Сортировка"
                value="dc:title,upnp:genre,upnp:album,dc:creator,res@size,res@duration,res@bitrate,dc:date"
              />
            </div>
            <hr className="mr-5 border-[#4f6778]" />
            <div className="flex h-6 items-center pl-[9px]">
              <Check label="Samsung DCM10" checked className="w-[129px]" />
              <Check label="Поддержка UPnP-событий" checked />
            </div>
          </Group>

          <Group title="Идентификаторы медиа-ресурсов">
            <div className="flex h-6 items-center justify-between pr-px pl-2.5">
              <Check label="Использовать сокращенные (16 символов) идентификаторы медиа-ресурсов" />
              <button
                aria-label="Сбросить"
                className="flex size-[22px] items-center justify-center border border-[#33495a] bg-linear-to-b from-[#a4bbca] to-[#7f97a6]"
              >
                <Icon className="size-4" box={16}>
                  <path d="M7 6h2l-1 8H6z" fill="#c8901c" />
                  <path d="M8 5C5 2 2 4 2 7c2-1 3-1 5 0-2 1-3 2-3 4 2-2 3-3 4-4 1 1 3 2 4 5 1-3 0-4-2-5 2-1 3 0 4 1 0-4-2-5-4-4 1-1 2-1 3-1-2-3-4-1-5 2z" fill="#18a02a" />
                  <path d="M3 15c1-3 9-3 11 0z" fill="#f8d02a" />
                </Icon>
              </button>
            </div>
          </Group>

          <Group title="Передача данных">
            <div className="mt-[6px] flex h-6 items-center pl-3">
              <span className="w-[249px]">Размер порции передачи данных</span>
              <Spin label="Размер порции" value="512" className="w-[67px]" />
              <span className="ml-[9px]">КБ</span>
            </div>
            <div className="flex h-6 items-center gap-0.5 pl-3">
              <span className="whitespace-nowrap">
                Закрытие соединения после передачи транскодированного файла через
              </span>
              <Spin label="Закрытие соединения" value="0" className="w-[39px]" />
              <span className="ml-1">секунд</span>
            </div>
            <Group
              title="Режим передачи данных неизвестной длины (Transfer-Encoding: chunked)"
              className="mx-[9px] mt-[3px]"
            >
              <div className="flex flex-col gap-[7px] pt-1.5 pb-[7px] pl-2">
                <Check label="UPnP-описания сервисов и ресурсов медиа-сервера" className="h-[13px]" />
                <Check
                  label="Файлы без транскодирования и файлы с известной длиной после транскодирования"
                  className="h-[13px]"
                />
                <Check label="Файлы с транскодированием" className="h-[13px]" />
                <Check
                  label="Интернет-ресурсы и ресурсы цифрового телевидения (DVB)"
                  className="h-[13px]"
                />
              </div>
            </Group>
            <Check
              label="Обработка запроса окончания транскодированного файла"
              checked
              className="h-8 pl-2.5"
            />
          </Group>
        </div>
      </Group>
    </div>

    <footer className="flex gap-3 pt-2 pr-1 pl-[11px]">
      <PushButton label="Загрузить" />
      <PushButton label="Сохранить" />
      <PushButton label="Удалить" />
      <div className="ml-auto flex gap-2.5">
        <PushButton label="OK" primary />
        <PushButton label="Отмена" />
      </div>
    </footer>
  </div>
);

/* hand-drawn step marks over the windows */
const Marks = () => (
  <svg
    className="pointer-events-none absolute top-0 left-0 h-[786px] w-[1072px] fill-none stroke-[#f60c0c] stroke-2"
    viewBox="0 0 1072 786"
    strokeLinecap="round"
    strokeLinejoin="round"
    aria-hidden="true"
  >
    <path d="M385 1c0 10-1 18-4 28v11l-4 5M373 25l9-4 7-7" />
    <path d="M151 280c8-3 15-1 13 8-2 8-9 11-15 16-2 7-2 13 1 13l15-1" />
    <path d="M311 342c9-1 15-2 18 0-3 6-10 8-15 13 10 0 16 2 16 8 0 8-9 12-21 11" />
    <path d="M396 331l-3 19c10-2 18 1 18 6-1 8-6 14-13 17-5-1-3-6-9-8M400 333l17 1" />
    <path d="M911 270c0 8 0 13 5 14h16M914 294c0 7-1 10-1 17l19-1M749 292c1 10 1 16-2 24 8-3 16-2 26-2M540 374c0 12 0 20 7 24h18" />
  </svg>
);

export default function App() {
  return (
    <main
      className={clsx("relative h-screen overflow-hidden bg-white text-[11px] text-black", tahoma)}
    >
      <Defs />
      <div className="absolute top-[29px] right-0 bottom-0 w-[66px] bg-black" />
      <MainWindow />
      <SettingsWindow />
      <DeviceWindow />
      <Marks />
    </main>
  );
}
